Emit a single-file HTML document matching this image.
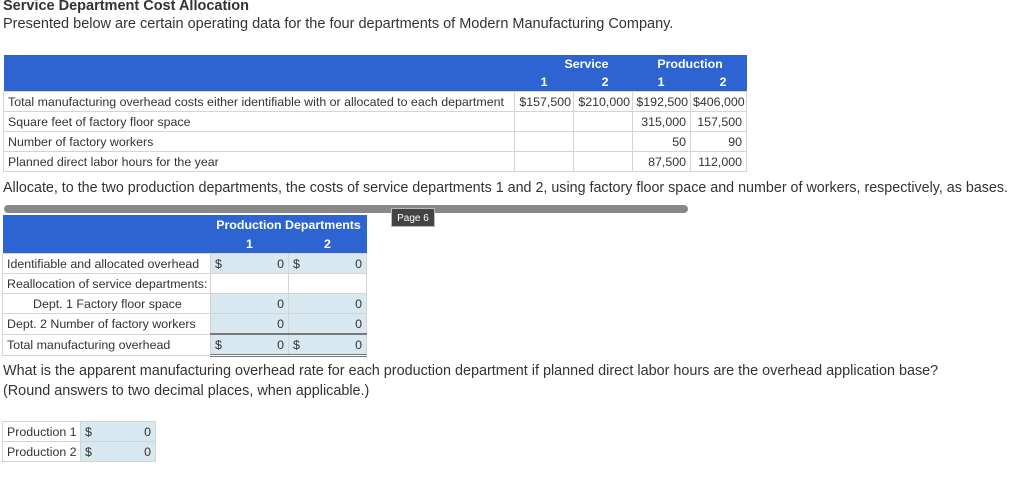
<!DOCTYPE html>
<html><head><style>
body{margin:0;width:1024px;height:478px;background:#fff;font-family:"Liberation Sans",sans-serif;color:#333;position:relative;overflow:hidden}
.a{position:absolute;white-space:nowrap}
table{border-collapse:collapse;position:absolute;font-size:12.4px;color:#333;table-layout:fixed}
td{height:19px;padding:0 4px;border:1px solid #d4d4d4;white-space:nowrap;overflow:hidden}
.h td{background:#2d64d2;color:#fff;font-weight:bold;border:none;height:18px}
.r{text-align:right}
.c{text-align:center}
.b{background:#d7e8f0}
</style></head><body>
<div class="a" style="left:3px;top:-2px;font-size:14.5px;font-weight:bold;">Service Department Cost Allocation</div>
<div class="a" style="left:3px;top:16px;font-size:14.5px;">Presented below are certain operating data for the four departments of Modern Manufacturing Company.</div>

<table style="left:3px;top:55px;width:743px">
<colgroup><col style="width:511px"><col style="width:59px"><col style="width:59px"><col style="width:58px"><col style="width:56px"></colgroup>
<tr class="h"><td></td><td colspan="2" class="c" style="padding-left:30px">Service</td><td colspan="2" class="c" style="padding-left:5px">Production</td></tr>
<tr class="h"><td></td><td class="r" style="padding-right:26px">1</td><td class="r" style="padding-right:24px">2</td><td class="r" style="padding-right:26px">1</td><td class="r" style="padding-right:20px">2</td></tr>
<tr><td>Total manufacturing overhead costs either identifiable with or allocated to each department</td><td class="r" style="padding:0 2px">$157,500</td><td class="r" style="padding:0 2px">$210,000</td><td class="r" style="padding:0 2px">$192,500</td><td class="r" style="padding:0 2px">$406,000</td></tr>
<tr><td>Square feet of factory floor space</td><td></td><td></td><td class="r">315,000</td><td class="r">157,500</td></tr>
<tr><td>Number of factory workers</td><td></td><td></td><td class="r">50</td><td class="r">90</td></tr>
<tr><td>Planned direct labor hours for the year</td><td></td><td></td><td class="r">87,500</td><td class="r">112,000</td></tr>
</table>

<div class="a" style="left:3px;top:180px;font-size:14.3px;">Allocate, to the two production departments, the costs of service departments 1 and 2, using factory floor space and number of workers, respectively, as bases.</div>

<div class="a" style="left:4px;top:205px;width:684px;height:8px;background:#888;border-radius:4px"></div>
<div class="a" style="left:391px;top:208px;width:44px;height:19px;background:#444;color:#fff;font-size:10px;line-height:19px;text-align:center;border:1px solid #bbb;box-sizing:border-box">Page 6</div>

<table style="left:2px;top:215px;width:364px">
<colgroup><col style="width:208px"><col style="width:78px"><col style="width:78px"></colgroup>
<tr class="h"><td style="height:20px"></td><td colspan="2" class="c" style="font-size:12.4px">Production Departments</td></tr>
<tr class="h"><td></td><td class="c">1</td><td class="c">2</td></tr>
<tr><td>Identifiable and allocated overhead</td><td class="b">$<span style="float:right">0</span></td><td class="b">$<span style="float:right">0</span></td></tr>
<tr><td>Reallocation of service departments:</td><td></td><td></td></tr>
<tr><td style="padding-left:30px">Dept. 1 Factory floor space</td><td class="b r">0</td><td class="b r">0</td></tr>
<tr><td>Dept. 2 Number of factory workers</td><td class="b r">0</td><td class="b r">0</td></tr>
<tr><td style="height:18px">Total manufacturing overhead</td><td class="b" style="border-top:2px solid #777;border-bottom:3px double #777">$<span style="float:right">0</span></td><td class="b" style="border-top:2px solid #777;border-bottom:3px double #777">$<span style="float:right">0</span></td></tr>
</table>

<div class="a" style="left:3px;top:363px;font-size:14.4px;">What is the apparent manufacturing overhead rate for each production department if planned direct labor hours are the overhead application base?</div>
<div class="a" style="left:3px;top:383px;font-size:14.4px;">(Round answers to two decimal places, when applicable.)</div>

<table style="left:2px;top:421px;width:153px">
<colgroup><col style="width:78px"><col style="width:75px"></colgroup>
<tr><td>Production 1</td><td class="b">$<span style="float:right">0</span></td></tr>
<tr><td>Production 2</td><td class="b">$<span style="float:right">0</span></td></tr>
</table>
</body></html>
